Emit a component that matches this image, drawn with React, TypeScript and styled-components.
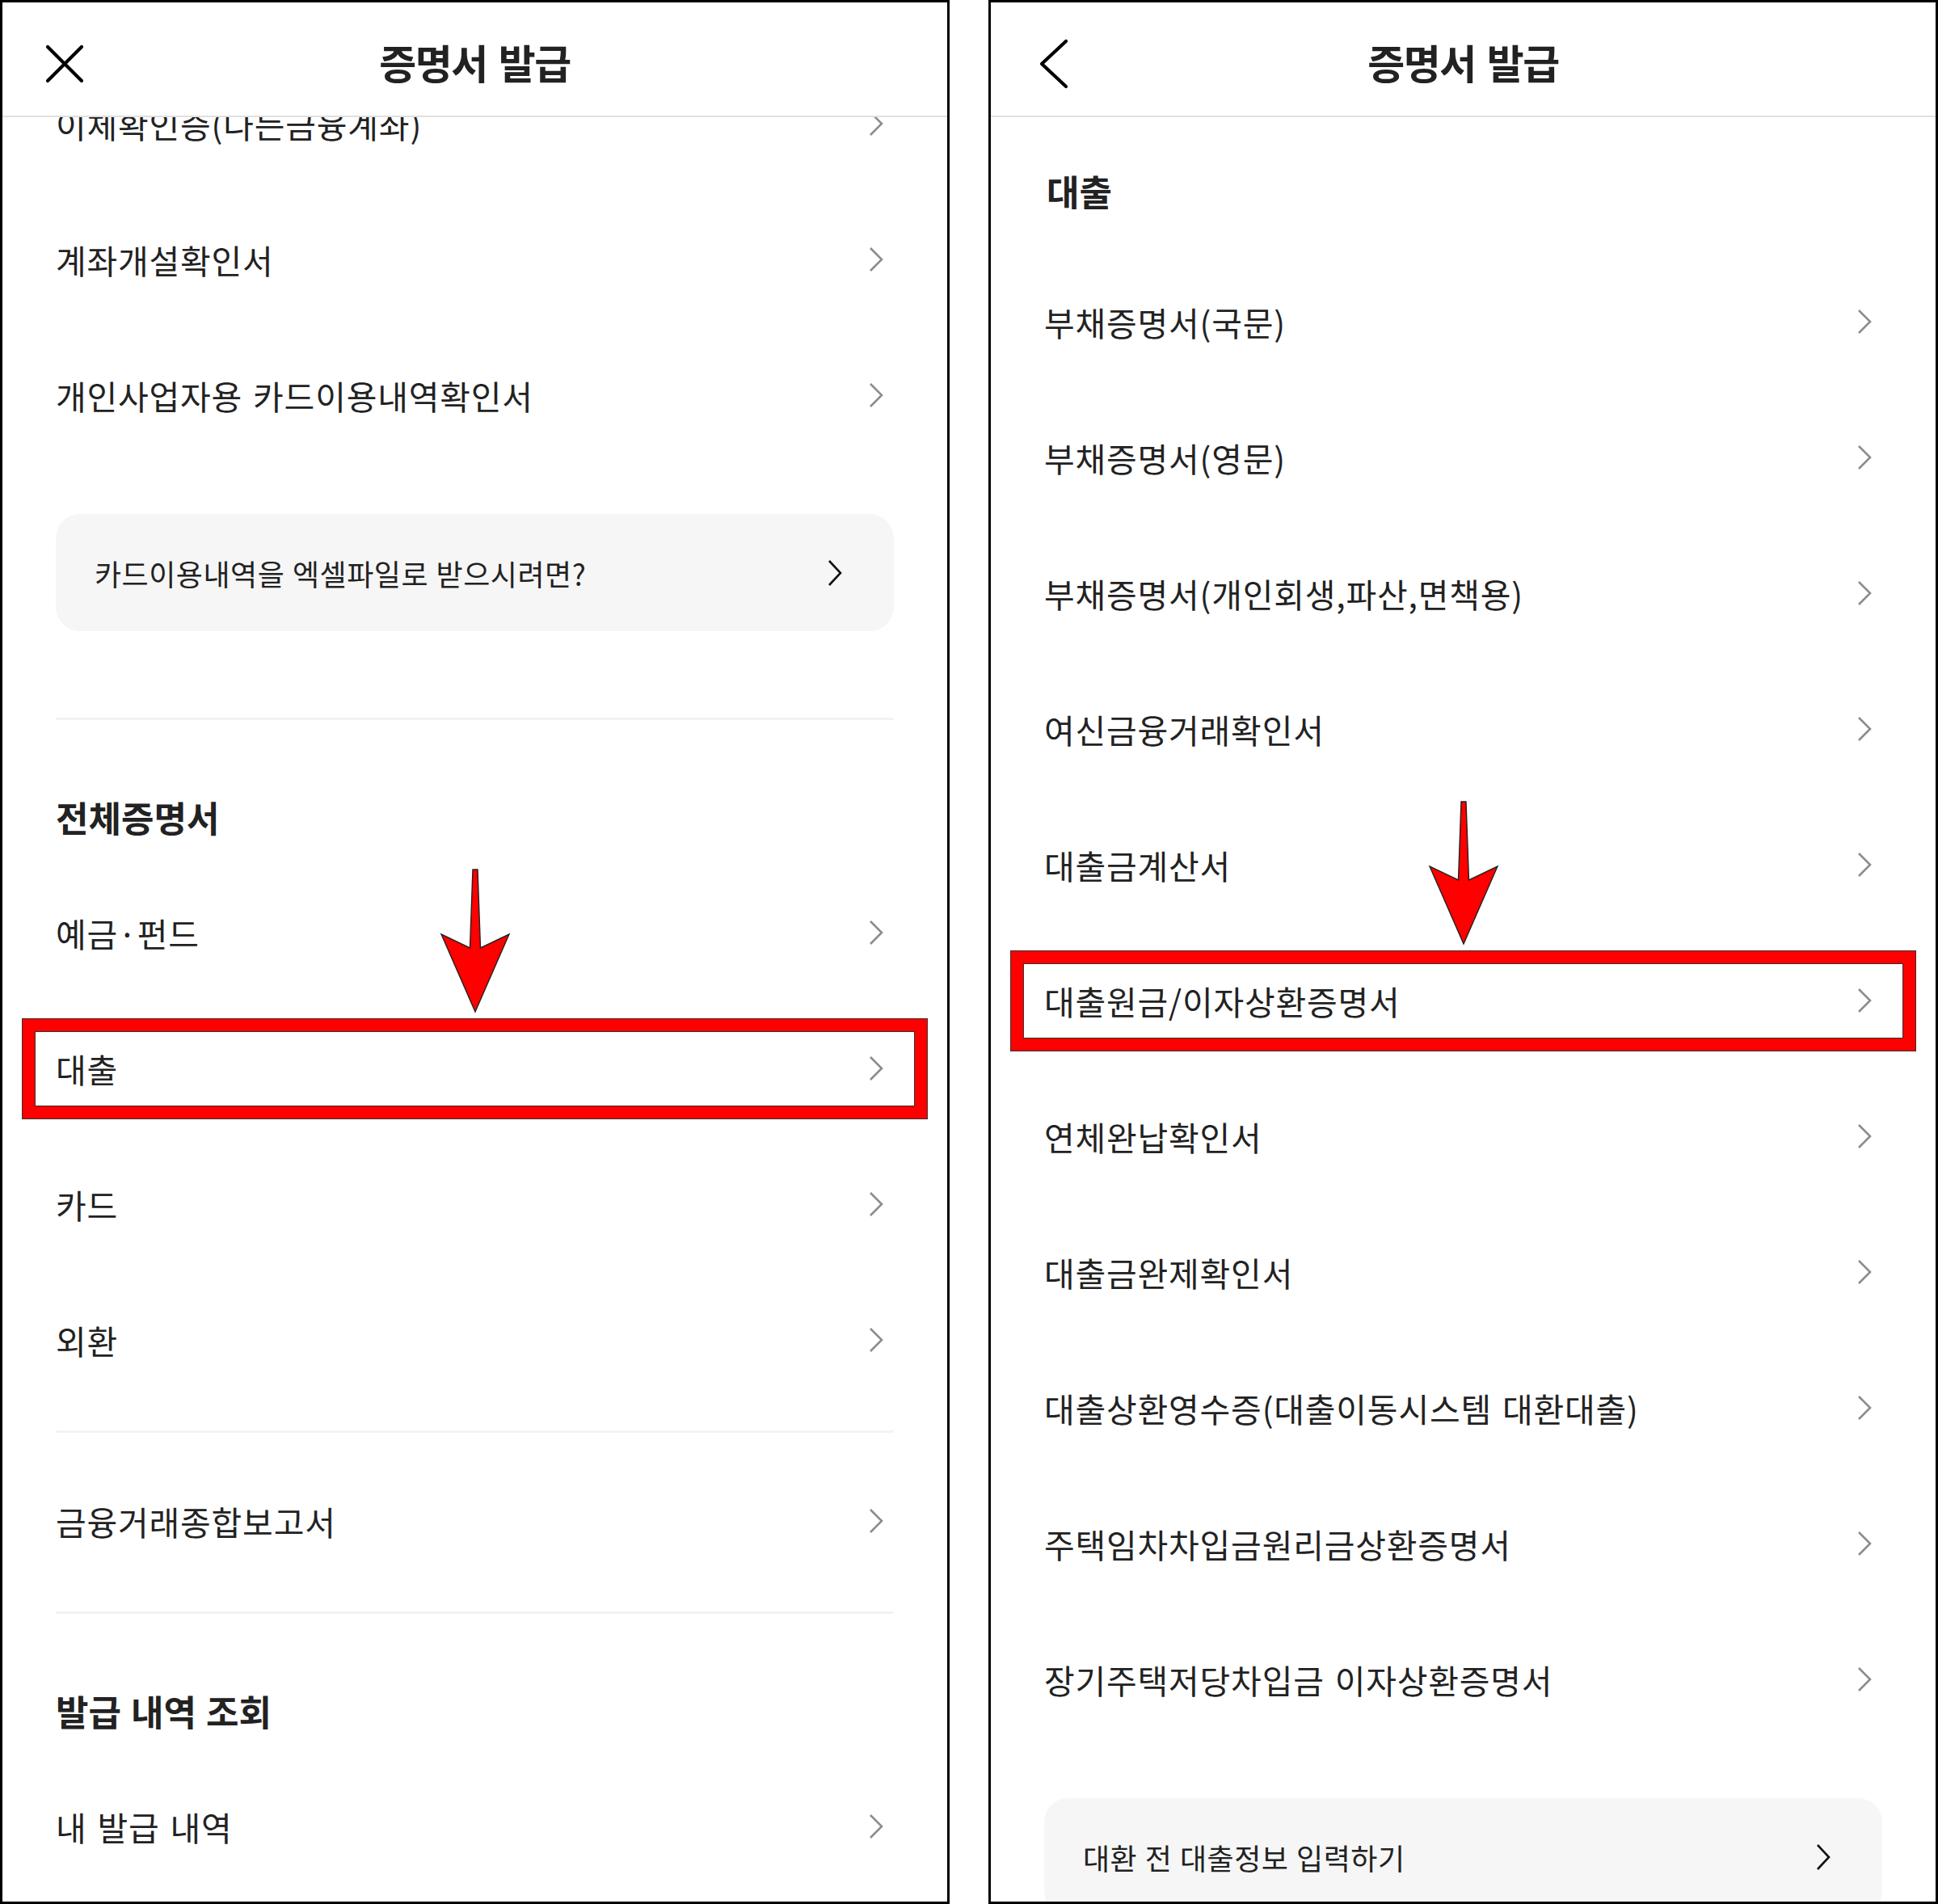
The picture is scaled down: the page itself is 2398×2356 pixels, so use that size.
import React from "react";
import styled, { createGlobalStyle } from "styled-components";

const GlobalStyle = createGlobalStyle`
  html, body {
    margin: 0;
    padding: 0;
    background: #fff;
  }
  body {
    font-family: "Noto Sans CJK KR", "Noto Sans", sans-serif;
    color: #222;
  }
`;

const CloseIcon = () => (
  <svg width="48" height="48" viewBox="0 0 48 48">
    <path d="M3 3 L45 45 M45 3 L3 45" stroke="#000" strokeWidth="4.2" strokeLinecap="round" fill="none" />
  </svg>
);

const BackIcon = () => (
  <svg width="48" height="62" viewBox="0 0 48 62">
    <polyline points="40,3 10,31 40,59" stroke="#000" strokeWidth="4.2" strokeLinecap="round" strokeLinejoin="round" fill="none" />
  </svg>
);

const Chevron = ({ dark }: { dark?: boolean }) => (
  <svg width="18" height={dark ? 34 : 32} viewBox={dark ? "0 0 18 34" : "0 0 18 32"}>
    <polyline
      points={dark ? "2,2 16,17 2,32" : "2,2 16,16 2,30"}
      stroke={dark ? "#111" : "#8c8c8c"}
      strokeWidth="2.6"
      fill="none"
    />
  </svg>
);

const ArrowDown = () => (
  <ArrowSvg width="88" height="180" viewBox="0 0 88 180">
    <polygon
      points="41,2 47,2 50.5,99 86,82 44,178 2,82 37.5,99"
      fill="#ff0000"
      stroke="#222"
      strokeWidth="1.4"
    />
  </ArrowSvg>
);

type Item = { label: string; highlight?: boolean };

const Row = ({ label, highlight }: Item) => (
  <RowBox>
    <RowLabel>{label}</RowLabel>
    <Chevron />
    {highlight && (
      <>
        <RedBox />
        <ArrowDown />
      </>
    )}
  </RowBox>
);

const Header = ({ back }: { back?: boolean }) => (
  <HeaderBar>
    <IconSlot>{back ? <BackIcon /> : <CloseIcon />}</IconSlot>
    <Title>증명서 발급</Title>
    <span />
  </HeaderBar>
);

const LeftScreen = () => (
  <Panel>
    <Header />
    <Body>
      <List $offset={-76}>
        <Row label="이체확인증(나든금융계좌)" />
        <Row label="계좌개설확인서" />
        <Row label="개인사업자용 카드이용내역확인서" />
        <Banner>
          <BannerText>카드이용내역을 엑셀파일로 받으시려면?</BannerText>
          <Chevron dark />
        </Banner>
        <Divider />
        <SectionTitle>전체증명서</SectionTitle>
        <Row label="예금·펀드" />
        <Row label="대출" highlight />
        <Row label="카드" />
        <Row label="외환" />
        <Divider />
        <Row label="금융거래종합보고서" />
        <Divider />
        <SectionTitle>발급 내역 조회</SectionTitle>
        <Row label="내 발급 내역" />
      </List>
    </Body>
  </Panel>
);

const loanItems: Item[] = [
  { label: "부채증명서(국문)" },
  { label: "부채증명서(영문)" },
  { label: "부채증명서(개인회생,파산,면책용)" },
  { label: "여신금융거래확인서" },
  { label: "대출금계산서" },
  { label: "대출원금/이자상환증명서", highlight: true },
  { label: "연체완납확인서" },
  { label: "대출금완제확인서" },
  { label: "대출상환영수증(대출이동시스템 대환대출)" },
  { label: "주택임차차입금원리금상환증명서" },
  { label: "장기주택저당차입금 이자상환증명서" },
];

const RightScreen = () => (
  <Panel>
    <Header back />
    <Body>
      <List $offset={0}>
        <SectionTitle $lead>대출</SectionTitle>
        {loanItems.map((item) => (
          <Row key={item.label} {...item} />
        ))}
        <Banner>
          <BannerText>대환 전 대출정보 입력하기</BannerText>
          <Chevron dark />
        </Banner>
      </List>
    </Body>
  </Panel>
);

export default function App() {
  return (
    <>
      <GlobalStyle />
      <Page>
        <LeftScreen />
        <RightScreen />
      </Page>
    </>
  );
}

const Page = styled.div`
  display: flex;
  gap: 48px;
  width: 2398px;
  height: 2356px;
`;

const Panel = styled.section`
  box-sizing: border-box;
  width: 1175px;
  height: 2356px;
  border: 3px solid #000;
  display: flex;
  flex-direction: column;
  background: #fff;
  overflow: hidden;
`;

const HeaderBar = styled.header`
  box-sizing: border-box;
  flex: none;
  height: 142px;
  padding: 12px 0 0 53px;
  display: grid;
  grid-template-columns: 1fr auto 1fr;
  align-items: center;
  border-bottom: 2px solid #e0e0e0;
  position: relative;
  z-index: 2;
  background: #fff;
`;

const IconSlot = styled.div`
  display: flex;
  align-items: center;
  height: 62px;
`;

const Title = styled.h1`
  margin: -6px 0 0 -53px;
  font-size: 50px;
  font-weight: 700;
  letter-spacing: -1.5px;
  word-spacing: 4px;
  color: #222;
`;

const Body = styled.div`
  flex: 1;
  overflow: hidden;
  padding: 0 66px;
`;

const List = styled.div<{ $offset: number }>`
  margin-top: ${(p) => p.$offset}px;
  display: flex;
  flex-direction: column;
`;

const RowBox = styled.div`
  position: relative;
  flex: none;
  height: 168px;
  display: flex;
  align-items: center;
  justify-content: space-between;
  padding-right: 13px;
`;

const RowLabel = styled.span`
  font-size: 41px;
  letter-spacing: 0.8px;
  word-spacing: 3px;
  color: #222;
  white-space: nowrap;
`;

const RedBox = styled.div`
  position: absolute;
  top: 23px;
  bottom: 22px;
  left: -41px;
  right: -41px;
  border: 15px solid #ff0000;
  box-shadow: 0 0 0 1px #333, inset 0 0 0 1px #333;
  pointer-events: none;
`;

const ArrowSvg = styled.svg`
  position: absolute;
  left: 50%;
  top: -164px;
  margin-left: -44px;
  z-index: 1;
`;

const Banner = styled.div`
  flex: none;
  box-sizing: border-box;
  height: 145px;
  margin: 63px 0 79px;
  padding: 0 64px 0 48px;
  border-radius: 30px;
  background: #f6f6f6;
  display: flex;
  align-items: center;
  justify-content: space-between;
`;

const BannerText = styled.span`
  font-size: 36px;
  letter-spacing: 0.5px;
  word-spacing: 1px;
  color: #222;
`;

const Divider = styled.hr`
  flex: none;
  margin: 28px 0 25px;
  border: none;
  height: 3px;
  background: #f3f3f3;
`;

const SectionTitle = styled.h2<{ $lead?: boolean }>`
  margin: 0;
  padding: ${(p) => (p.$lead ? "66px 0 53px 3px" : "70px 0 34px")};
  line-height: 50px;
  font-size: 44px;
  font-weight: 700;
  letter-spacing: 0;
  word-spacing: 2px;
  color: #222;
`;
